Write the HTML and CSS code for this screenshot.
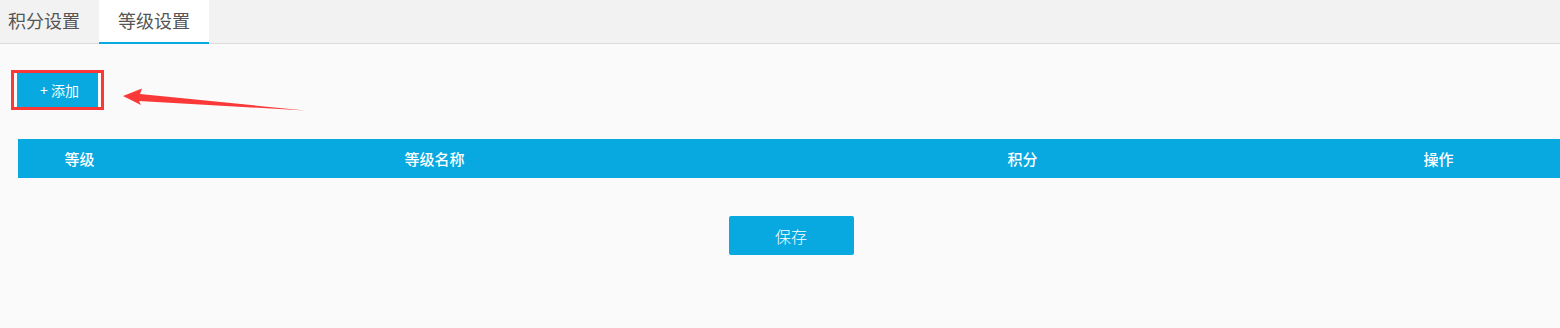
FILE: index.html
```html
<!DOCTYPE html>
<html lang="zh-CN">
<head>
<meta charset="utf-8">
<title>等级设置</title>
<link rel="stylesheet" href="styles.css">
</head>
<body>
<div class="tabs">
  <div class="tab first">积分设置</div>
  <div class="tab active">等级设置</div>
</div>
<div class="content">
  <div class="toolbar">
    <button class="btn-add">+ 添加</button>
    <div class="mark"></div>
    <svg class="arrow" width="200" height="30" viewBox="0 0 200 30">
      <polygon points="3,14 22,6.5 20,12 185,28.5 19,19 21,23" fill="#fb3838"/>
    </svg>
  </div>
  <div class="table">
    <div class="th c1">等级</div>
    <div class="th c2">等级名称</div>
    <div class="th c3">积分</div>
    <div class="th c4">操作</div>
  </div>
  <div class="actions">
    <button class="btn-save">保存</button>
  </div>
</div>
</body>
</html>
```

FILE: styles.css
```css
html, body {
  margin: 0;
  padding: 0;
}
body {
  background: #fafafa;
  font-family: "Noto Sans CJK SC", "Noto Sans", sans-serif;
  width: 1560px;
  height: 328px;
  overflow: hidden;
}
.tabs {
  display: flex;
  height: 43px;
  background: #f2f2f2;
  border-bottom: 1px solid #dcdcdc;
}
.tab {
  height: 43px;
  line-height: 41px;
  font-size: 18px;
  color: #555;
  padding: 0 19px;
  box-sizing: border-box;
}
.tab.first {
  padding-left: 8px;
}
.tab.active {
  background: #fff;
  height: 44px;
  border-bottom: 2px solid #08a8e0;
  width: 110px;
  margin-bottom: -1px;
}
.content {
  padding-top: 29px;
}
.toolbar {
  position: relative;
  padding-left: 17px;
  height: 34px;
}
.btn-add {
  display: block;
  width: 81px;
  height: 34px;
  border: 0;
  padding: 0 0 0 4px;
  background: #08a8e0;
  color: #fff;
  font-family: inherit;
  font-size: 14px;
}
.mark {
  position: absolute;
  left: 11px;
  top: -3px;
  width: 87px;
  height: 34px;
  border: 3px solid #fb3838;
}
.arrow {
  position: absolute;
  left: 120px;
  top: 9px;
}
.table {
  display: flex;
  margin: 32px 0 0 18px;
  height: 39px;
  background: #08a8e0;
  color: #fff;
  font-size: 15px;
  font-weight: 500;
}
.th {
  line-height: 39px;
  text-align: center;
}
.c1 { width: 123px; }
.c2 { width: 587px; }
.c3 { width: 589px; }
.c4 { width: 243px; }
.actions {
  display: flex;
  justify-content: center;
  padding-left: 22px;
  margin-top: 38px;
}
.btn-save {
  width: 125px;
  height: 39px;
  border: 0;
  border-radius: 2px;
  background: #08a8e0;
  color: #fff;
  font-family: inherit;
  font-size: 16px;
  font-weight: 300;
  padding: 0;
}
```
